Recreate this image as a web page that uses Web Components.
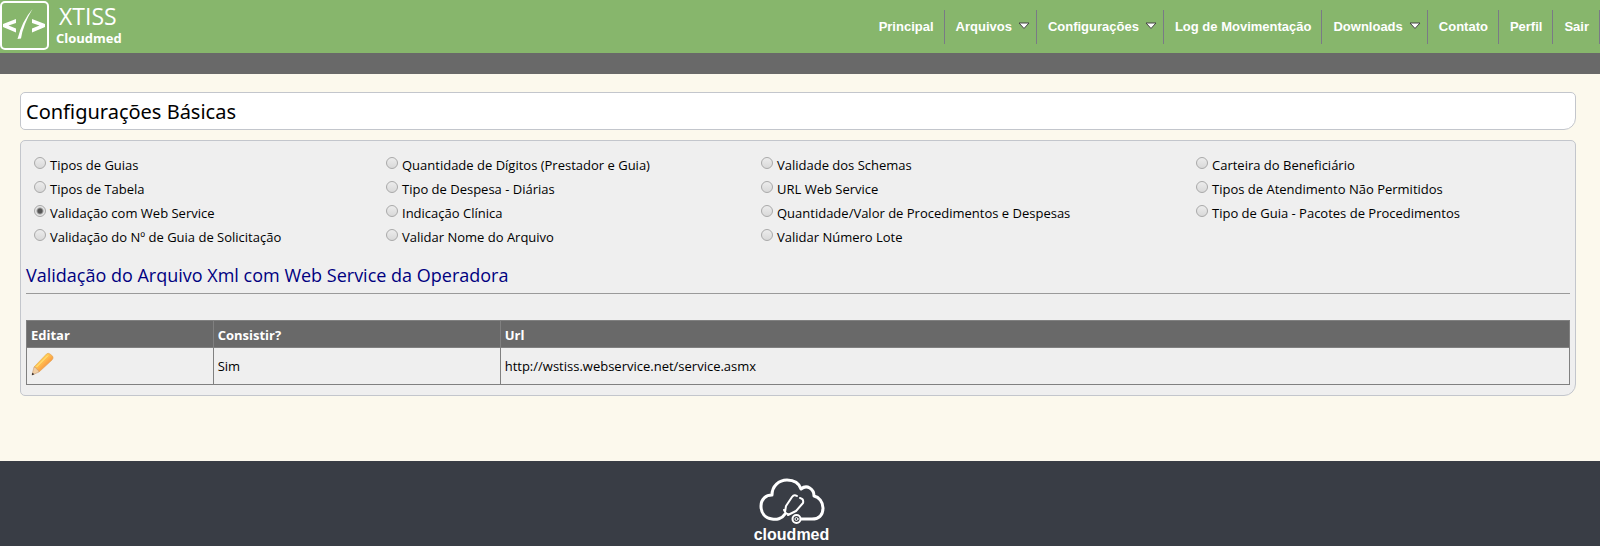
<!DOCTYPE html>
<html lang="pt-BR">
<head>
<meta charset="utf-8">
<title>XTISS Cloudmed - Configurações Básicas</title>
<style>
body { margin: 0; background: #fcf9ed; color: #000; font: 13px/24px "Open Sans", "Noto Sans", sans-serif; }
</style>
</head>
<body>
<x-app>
  <x-header slot="header">
    <x-menu-item href="#principal">Principal</x-menu-item>
    <x-menu-item href="#arquivos" submenu>Arquivos</x-menu-item>
    <x-menu-item href="#configuracoes" submenu>Configurações</x-menu-item>
    <x-menu-item href="#log">Log de Movimentação</x-menu-item>
    <x-menu-item href="#downloads" submenu>Downloads</x-menu-item>
    <x-menu-item href="#contato">Contato</x-menu-item>
    <x-menu-item href="#perfil">Perfil</x-menu-item>
    <x-menu-item href="#sair">Sair</x-menu-item>
  </x-header>
  <x-page-title>Configurações Básicas</x-page-title>
  <x-panel>
    <x-options></x-options>
    <x-section-title>Validação do Arquivo Xml com Web Service da Operadora</x-section-title>
    <x-service-table></x-service-table>
  </x-panel>
  <x-footer slot="footer"></x-footer>
</x-app>

<script>
function define(name, html, setup) {
  const template = document.createElement('template');
  template.innerHTML = html;
  customElements.define(name, class extends HTMLElement {
    constructor() {
      super();
      this.attachShadow({ mode: 'open' }).append(template.content.cloneNode(true));
    }
    connectedCallback() {
      if (setup) setup(this, this.shadowRoot);
    }
  });
}

define('x-app', `
  <style>
    :host { display: flex; flex-direction: column; min-height: 100vh; }
    main { flex: 1; display: flex; flex-direction: column; gap: 10px; padding: 18px 24px 64px 20px; }
  </style>
  <slot name="header"></slot>
  <main><slot></slot></main>
  <slot name="footer"></slot>`);

define('x-header', `
  <style>
    :host { display: block; background: #87b66c; border-bottom: 21px solid #696969; color: #fff; }
    header { display: flex; align-items: center; justify-content: space-between; min-height: 53px; }
    .brand { display: flex; align-items: center; gap: 7px; color: inherit; text-decoration: none; padding-bottom: 3px; }
    .mark { display: block; width: 49px; height: 49px; }
    .names { display: grid; line-height: 18px; font-weight: bold; }
    .product { font-size: 23px; line-height: 26px; font-weight: normal; padding-left: 3px; }
    nav { display: flex; flex-wrap: wrap; }
  </style>
  <header>
    <a class="brand" href="#inicio">
      <svg class="mark" viewBox="0 0 49 49" fill="none" stroke="#fff" aria-hidden="true">
        <rect x="1" y="1" width="47" height="47" rx="4" stroke-width="2"/>
        <path d="M16 18V22L8.500 24.500 16 27.500V31.500L3 26V23ZM32 18V22L39.500 24.500 32 27.500V31.500L45 26V23Z" fill="#fff" stroke="none"/>
        <path d="M32.500 8Q22 20 17.500 38L21 37.500Q23 24 32.500 8Z" fill="#fff" stroke="none"/>
      </svg>
      <span class="names"><span class="product">XTISS</span><span>Cloudmed</span></span>
    </a>
    <nav aria-label="Menu principal"><slot></slot></nav>
  </header>`);

define('x-menu-item', `
  <style>
    :host { display: block; border-right: 1px solid #7a7a86; font: bold 13px/34px "Liberation Sans", Arial, sans-serif; }
    :host([submenu]) a { padding-right: 6px; }
    a { display: flex; align-items: center; gap: 6px; padding: 0 10px 0 11px; color: #fff; text-decoration: none; white-space: nowrap; }
    svg { display: none; width: 12px; height: 8px; padding-bottom: 2px; }
    :host([submenu]) svg { display: block; }
  </style>
  <a><span><slot></slot></span>
    <svg viewBox="0 0 12 8" aria-hidden="true"><path d="M1 1H11L6 6.500Z" fill="#fff" stroke="#444"/></svg>
  </a>`, (host, root) => { root.querySelector('a').href = host.getAttribute('href'); });

define('x-page-title', `
  <style>
    :host { display: block; background: #fff; border: 1px solid #c3c6cc; border-radius: 5px 5px 12px 5px; padding: 1px 5px 0; }
    h1 { margin: 0; font: 20px/35px "Noto Sans", sans-serif; }
  </style>
  <h1><slot></slot></h1>`);

define('x-panel', `
  <style>
    :host { display: block; background: #efefef; border: 1px solid #c3c6cc; border-radius: 5px 5px 12px 5px; padding: 12px 5px 10px; }
  </style>
  <slot></slot>`);

define('x-section-title', `
  <style>
    :host { display: block; margin: 14px 0 26px; border-bottom: 1px solid #9a9a9a; }
    h2 { margin: 0; padding-bottom: 6px; color: #000080; font-size: 18px; line-height: 24px; font-weight: normal; }
  </style>
  <h2><slot></slot></h2>`);

const options = [
  ['Tipos de Guias', 'Tipos de Tabela', 'Validação com Web Service', 'Validação do Nº de Guia de Solicitação'],
  ['Quantidade de Dígitos (Prestador e Guia)', 'Tipo de Despesa - Diárias', 'Indicação Clínica', 'Validar Nome do Arquivo'],
  ['Validade dos Schemas', 'URL Web Service', 'Quantidade/Valor de Procedimentos e Despesas', 'Validar Número Lote'],
  ['Carteira do Beneficiário', 'Tipos de Atendimento Não Permitidos', 'Tipo de Guia - Pacotes de Procedimentos']
];

define('x-options', `
  <style>
    :host { display: block; }
    fieldset { display: grid; grid-template-columns: 352fr 375fr 435fr 374fr; margin: 0; padding: 0 0 0 8px; border: 0; }
    div { display: flex; align-items: center; }
    label { padding-left: 4px; }
    input { appearance: none; box-sizing: border-box; width: 12px; height: 12px; margin: 0 0 4px; border: 1px solid #a9a9a9; border-radius: 50%; background: linear-gradient(#ececec, #d9d9d9); }
    input:checked { background: radial-gradient(circle, #555 0 2px, #e6e6e6 4px); }
  </style>
  <fieldset aria-label="Configuração"></fieldset>`, (host, root) => {
  const fieldset = root.querySelector('fieldset');
  for (const list of options) {
    const column = document.createElement('section');
    column.innerHTML = list.map(text => {
      const id = text.toLowerCase().replace(/[^a-z]+/g, '-');
      return `<div><input type="radio" name="opcao" id="${id}"${text === 'Validação com Web Service' ? ' checked' : ''}><label for="${id}">${text}</label></div>`;
    }).join('');
    fieldset.append(column);
  }
});

define('x-service-table', `
  <style>
    :host { display: block; }
    table { width: 100%; border-collapse: collapse; table-layout: fixed; }
    th, td { box-sizing: border-box; border: 1px solid #808080; padding: 0 4px; text-align: left; }
    th { background: #696969; color: #fff; height: 27px; padding-top: 1px; }
    td { height: 37px; }
    .edit { width: 12.1%; }
    .check { width: 18.6%; }
    button { display: block; margin: 0 0 4px; padding: 0; border: 0; background: none; }
    svg { display: block; width: 24px; height: 24px; }
  </style>
  <table>
    <thead><tr><th class="edit" scope="col">Editar</th><th class="check" scope="col">Consistir?</th><th scope="col">Url</th></tr></thead>
    <tbody><tr>
      <td><button type="button" aria-label="Editar">
        <svg viewBox="0 0 24 24" aria-hidden="true">
          <defs><linearGradient id="wood" x1="0" y1="0" x2="1" y2="1"><stop offset=".3" stop-color="#ffd84f"/><stop offset=".5" stop-color="#ffb64d"/><stop offset=".72" stop-color="#f59040"/></linearGradient></defs>
          <path d="M3 15 15.500 2Q17 .5 19 2L21.500 4Q23 6 21 8L8 20Z" fill="url(#wood)" stroke="#e0a050" stroke-width=".6"/>
          <path d="M3 15 1 23 8 20Q7.500 17.500 6 17.500 5 15 3 15Z" fill="#f0cfa6" stroke="#c99c74" stroke-width=".6"/>
          <path d="M1.400 20.800.8 23.200 3.400 22.200Z" fill="#2e2929"/>
          <path d="M5.500 15 17 3.500" stroke="#ffe98a" stroke-width="1"/>
        </svg></button></td>
      <td>Sim</td>
      <td>http://wstiss.webservice.net/service.asmx</td>
    </tr></tbody>
  </table>`);

define('x-footer', `
  <style>
    :host { display: block; background: #393d45; color: #fff; }
    footer { display: flex; flex-direction: column; align-items: center; padding: 17px 17px 2px 0; }
    svg { display: block; width: 68px; height: 48px; }
    span { font: bold 16px/18px "Liberation Sans", Arial, sans-serif; }
  </style>
  <footer>
    <svg viewBox="0 0 68 48" fill="none" stroke="#fff" stroke-width="3" stroke-linecap="round" stroke-linejoin="round" aria-hidden="true">
      <path d="M27 36C24 41 18 42 14 41C7 40 3 35 3 28C3 21 8 17 14 17C14 8 21 2 29 2C36 2 41 5 43 11C49 6 56 11 56 18C61 19 65 24 65 30C65 38 60 41 54 41H43"/>
      <path d="M27 34 28 28 34 19Q36 16 39 18M42 20Q46 21 45 25L38 33 30 37M26 32Q28 37 32 36" stroke-width="2"/>
      <circle cx="38.500" cy="41" r="4" fill="#393d45" stroke-width="2"/>
      <circle cx="38.500" cy="41" r="1.500" stroke-width="1"/>
    </svg>
    <span>cloudmed</span>
  </footer>`);
</script>
</body>
</html>
